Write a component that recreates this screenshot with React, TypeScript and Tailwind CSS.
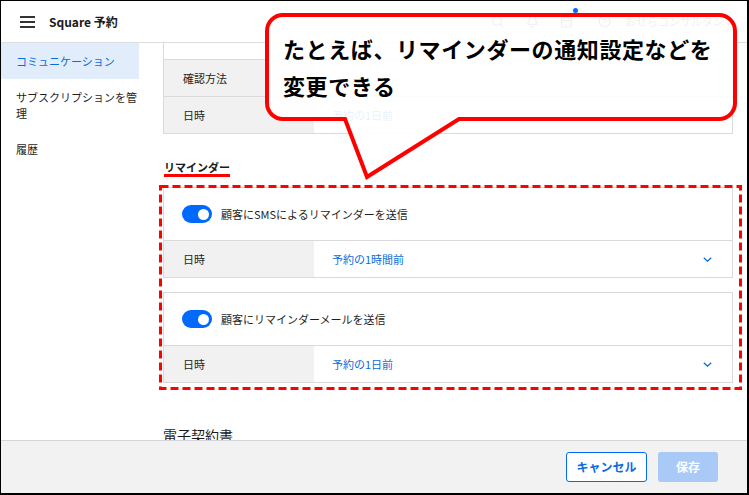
import React from "react";
import { Search, Bell, CalendarDays, CircleHelp } from "lucide-react";

function Chevron() {
  return (
    <svg width="9" height="5" viewBox="0 0 9 5" className="shrink-0">
      <polyline points="0.8,0.8 4.5,4.2 8.2,0.8" fill="none" stroke="#0b6be0" strokeWidth="1.3" />
    </svg>
  );
}

function Toggle() {
  return (
    <div className="relative w-[30px] h-[18px] rounded-full bg-[#006aff] shrink-0">
      <div className="absolute right-[3px] top-[3.5px] w-[11px] h-[11px] rounded-full bg-white" />
    </div>
  );
}

function Row({ label, value, chevron }: { label: string; value?: string; chevron?: boolean }) {
  return (
    <div className="flex h-[37px] border-t border-[#dadada]">
      <div className="w-[150px] bg-[#f1f1f1] pl-[19px] flex items-center text-[11px] text-[#1f1f1f]">{label}</div>
      <div className="flex-1 flex items-center pl-[18px] pr-[20px] text-[11px] text-[#0b6be0]">
        <span className="flex-1">{value}</span>
        {chevron && <Chevron />}
      </div>
    </div>
  );
}

function ReminderCard({ title, value }: { title: string; value: string }) {
  return (
    <div className="border border-[#dadada] bg-white">
      <div className="h-[52px] flex items-center pl-[18px]">
        <Toggle />
        <span className="ml-[9px] text-[11px] text-[#1f1f1f]">{title}</span>
      </div>
      <Row label="日時" value={value} chevron />
    </div>
  );
}

export default function App() {
  return (
    <div className="relative w-[749px] h-[495px] overflow-hidden bg-white font-['Noto_Sans_CJK_JP',sans-serif]">
      <div className="w-full h-full flex flex-col border-l border-t border-r-2 border-b-2 border-black">
        {/* Header */}
        <div className="h-[42px] shrink-0 border-b border-[#dedede] flex items-center pl-[19px] pr-[12px]">
          <div className="flex flex-col gap-[3px] w-[15px]">
            <div className="h-[2px] bg-[#333]" />
            <div className="h-[2px] bg-[#333]" />
            <div className="h-[2px] bg-[#333]" />
          </div>
          <span className="ml-[14px] text-[12px] font-semibold text-[#1a1a1a]">Square 予約</span>
          <div className="ml-auto flex items-center text-[#555]">
            <Search size={13} />
            <Bell size={13} className="ml-[22px]" />
            <div className="relative ml-[21px]">
              <CalendarDays size={13} />
            </div>
            <CircleHelp size={13} className="ml-[25px]" />
            <span className="ml-[14px] text-[11px] whitespace-nowrap">おせらコンサルタント</span>
          </div>
        </div>

        {/* Body */}
        <div className="flex-1 flex overflow-hidden">
          {/* Sidebar */}
          <div className="w-[138px] shrink-0 text-[11px] leading-[16px] text-[#1f1f1f]">
            <div className="bg-[#e1edfb] text-[#0b6be0] py-[10px] pl-[15px]">コミュニケーション</div>
            <div className="py-[10px] pl-[15px] pr-0 w-[138px]">
              <div className="w-[122px]">サブスクリプションを管理</div>
            </div>
            <div className="py-[10px] pl-[15px]">履歴</div>
          </div>

          {/* Content */}
          <div className="flex-1 pl-[24px] pr-[14px] overflow-hidden">
            <div className="border-x border-b border-[#dadada]">
              <div className="h-[16px]" />
              <Row label="確認方法" />
              <Row label="日時" value="予約の1日前" />
            </div>

            <div className="mt-[25px] pl-[1px] text-[11px] leading-[16px] h-[16px]">
              <span className="relative inline-block font-bold text-[#1a1a1a] align-top">
                リマインダー
                <span className="absolute left-0 right-0 top-[15px] h-[3px] bg-[#ff0000]" />
              </span>
            </div>

            <div className="relative mt-[12px]">
              <div className="flex flex-col gap-[14px]">
                <ReminderCard title="顧客にSMSによるリマインダーを送信" value="予約の1時間前" />
                <ReminderCard title="顧客にリマインダーメールを送信" value="予約の1日前" />
              </div>
              <svg
                className="absolute left-[-4px] top-[-2px] pointer-events-none"
                width="583"
                height="205"
                viewBox="0 0 583 205"
              >
                <rect x="1.5" y="1.5" width="580" height="202" fill="none" stroke="#ff0000" strokeWidth="3" strokeDasharray="8 4" />
              </svg>
            </div>

            <div className="mt-[42px] text-[14px] leading-[20px] text-[#1a1a1a]">電子契約書</div>
          </div>
        </div>

        {/* Footer */}
        <div className="h-[53px] shrink-0 border-t border-[#d6d6d6] bg-[#f2f2f2] flex items-center justify-end pr-[29px] gap-[11px]">
          <button className="w-[81px] h-[30px] rounded-[3px] border border-[#006aff] bg-white text-[#0b6be0] text-[12px] font-bold">
            キャンセル
          </button>
          <button className="w-[60px] h-[30px] rounded-[3px] bg-[#a9c9f6] text-white text-[12px] font-bold">保存</button>
        </div>
      </div>

      {/* Notification dot peeking above bubble */}
      <div className="absolute left-[573px] top-[8px] w-[5px] h-[5px] rounded-full bg-[#006aff]" />

      {/* Speech bubble annotation */}
      <svg className="absolute left-0 top-0 pointer-events-none" width="749" height="495" viewBox="0 0 749 495">
        <path
          d="M283,15 H719 A16,16 0 0 1 735,31 V103 A16,16 0 0 1 719,119 H459 L367,177 L345,119 H283 A16,16 0 0 1 267,103 V31 A16,16 0 0 1 283,15 Z"
          fill="white"
          fillOpacity="0.9"
          stroke="#ff0000"
          strokeWidth="4"
          strokeLinejoin="miter"
        />
      </svg>
      <div className="absolute left-[283px] top-[30px] text-[22px] leading-[37px] tracking-[0.6px] font-bold text-black whitespace-nowrap">
        <div>たとえば、リマインダーの通知設定などを</div>
        <div>変更できる</div>
      </div>
    </div>
  );
}
